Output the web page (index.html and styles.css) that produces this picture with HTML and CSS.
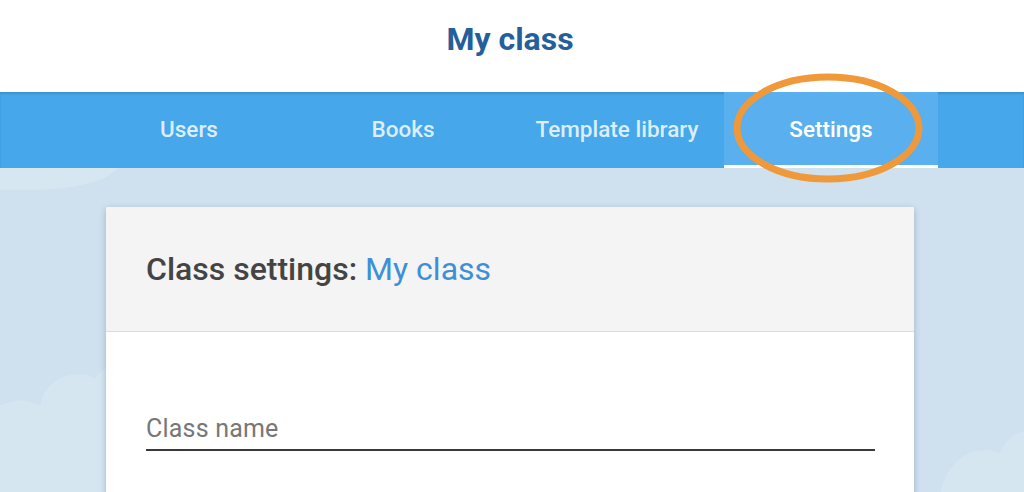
FILE: index.html
```html
<!DOCTYPE html>
<html lang="en">
<head>
<meta charset="utf-8">
<title>My class</title>
<link rel="stylesheet" href="styles.css">
</head>
<body>
<header class="topbar">
  <h1 class="app-title">My class</h1>
</header>
<nav class="tabbar">
  <div class="tabs">
    <a class="tab">Users</a>
    <a class="tab">Books</a>
    <a class="tab">Template library</a>
    <a class="tab active">Settings</a>
  </div>
</nav>
<main class="content">
  <svg class="clouds" width="1024" height="324" viewBox="0 0 1024 324" aria-hidden="true">
    <path d="M-40 20 C 60 26, 110 20, 125 -10 L -40 -10 Z" fill="#d7e7f2"/>
    <path d="M-20 330 L -20 255 C -5 232, 25 228, 40 238 C 45 212, 70 200, 95 210 C 110 190, 140 195, 150 215 L 150 330 Z" fill="#d6e6f1"/>
    <path d="M940 330 C 945 290, 975 275, 1000 285 C 1010 262, 1030 258, 1040 270 L 1040 330 Z" fill="#d6e6f1"/>
  </svg>
  <section class="card">
    <div class="card-head">
      <h2 class="card-title">Class settings: <span class="accent">My class</span></h2>
    </div>
    <div class="card-body">
      <div class="field">
        <span class="field-label">Class name</span>
      </div>
    </div>
  </section>
</main>
<svg class="highlight" width="200" height="120" viewBox="0 0 200 120" aria-hidden="true">
  <ellipse cx="100" cy="59" rx="91" ry="51" fill="none" stroke="#f0993a" stroke-width="7"/>
</svg>
</body>
</html>
```
FILE: styles.css
```css
* { box-sizing: border-box; }
html, body { margin: 0; padding: 0; }
body {
  font-family: Roboto, "Noto Sans", sans-serif;
  background: #cfe1ef;
  width: 1024px;
  height: 492px;
  overflow: hidden;
  position: relative;
}
.topbar {
  height: 92px;
  background: #ffffff;
  display: flex;
  align-items: center;
  justify-content: center;
}
.app-title {
  margin: 0 0 14px 0;
  font-size: 32px;
  font-weight: 700;
  color: #245e9b;
  transform: translateX(-2px);
}
.tabbar {
  height: 76px;
  background: #46a7eb;
  box-shadow: inset 0 2px 2px rgba(0,0,0,0.12);
}
.tabs {
  margin-left: 82px;
  width: 856px;
  height: 100%;
  display: grid;
  grid-template-columns: repeat(4, 214px);
}
.tab {
  display: flex;
  align-items: center;
  justify-content: center;
  font-size: 22.5px;
  font-weight: 500;
  color: rgba(255,255,255,0.82);
  padding-bottom: 2px;
}
.tab.active {
  background: #5aafee;
  color: #ffffff;
  border-bottom: 3px solid #ffffff;
  padding-bottom: 0;
}
.content {
  position: relative;
  height: 324px;
  padding-top: 39px;
  overflow: hidden;
}
.clouds {
  position: absolute;
  left: 0;
  top: 0;
}
.card {
  position: relative;
  margin-left: 106px;
  width: 808px;
  height: 300px;
  background: #ffffff;
  border-radius: 2px;
  box-shadow: 0 2px 6px rgba(40,70,100,0.3);
}
.card-head {
  height: 125px;
  background: #f4f4f4;
  border-bottom: 1px solid #dcdcdc;
  border-radius: 2px 2px 0 0;
  display: flex;
  align-items: center;
  padding: 0 40px 0 40px;
}
.card-title {
  margin: 0;
  font-size: 32px;
  font-weight: 500;
  color: #444444;
}
.accent {
  font-weight: 400;
  color: #3d8fd6;
}
.card-body {
  padding: 81px 39px 0 40px;
}
.field {
  border-bottom: 2px solid #3a3a3a;
  padding-bottom: 4px;
}
.field-label {
  display: block;
  font-size: 25px;
  line-height: 32px;
  color: #777777;
  letter-spacing: 0.2px;
}
.highlight {
  position: absolute;
  left: 728px;
  top: 69px;
}
```
